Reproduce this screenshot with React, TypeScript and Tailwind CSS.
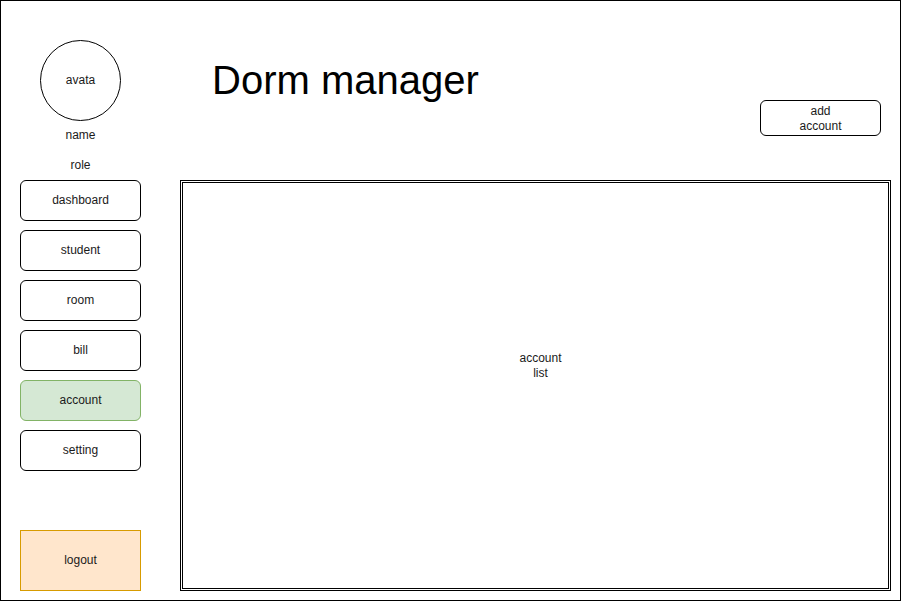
import * as React from "react";

type NavItem = {
  title: string;
  active?: boolean;
};

const navItems: NavItem[] = [
  { title: "dashboard" },
  { title: "student" },
  { title: "room" },
  { title: "bill" },
  { title: "account", active: true },
  { title: "setting" },
];

export default function App() {
  return (
    <div
      className="flex h-[601px] w-[901px] border border-black bg-white text-[12px] text-[#1a1a1a]"
      style={{ fontFamily: '"Liberation Sans", Arial, Helvetica, sans-serif' }}
    >
      {/* Sidebar */}
      <aside className="flex w-[159px] shrink-0 flex-col pl-[19px] pt-[39px]">
        <div className="flex w-[121px] flex-col items-center">
          <div className="flex h-[81px] w-[81px] items-center justify-center rounded-full border border-black pb-px">
            avata
          </div>
          <div className="flex h-[29px] items-center pb-[2px]">name</div>
          <div className="flex h-[30px] items-center">role</div>
        </div>

        <nav className="flex flex-col gap-[9px]">
          {navItems.map((item) => (
            <div
              key={item.title}
              className={
                item.active
                  ? "flex h-[41px] w-[121px] items-center justify-center rounded-md border border-[#82b366] bg-[#d5e8d4] pb-px"
                  : "flex h-[41px] w-[121px] items-center justify-center rounded-md border border-black bg-white pb-px"
              }
            >
              {item.title}
            </div>
          ))}
        </nav>

        <div className="mt-[59px] flex h-[61px] w-[121px] items-center justify-center border border-[#d79b00] bg-[#ffe6cc] pb-px">
          logout
        </div>
      </aside>

      {/* Main */}
      <main className="flex flex-1 flex-col pl-[20px]">
        <header className="flex h-[179px] items-start justify-between">
          <h1 className="ml-[32px] mt-[56px] text-[40px] leading-[46px] text-black">
            Dorm manager
          </h1>
          <button className="mr-[19px] mt-[99px] flex h-[36px] w-[121px] flex-col items-center justify-center rounded-md border border-black bg-white pt-px leading-[15px]">
            <span>add</span>
            <span>account</span>
          </button>
        </header>

        {/* Account list */}
        <section className="flex h-[411px] w-[711px] items-center justify-center border-[3px] border-double border-black pb-[40px] pl-[10px]">
          <div className="flex flex-col items-center leading-[15px]">
            <span>account</span>
            <span>list</span>
          </div>
        </section>
      </main>
    </div>
  );
}
